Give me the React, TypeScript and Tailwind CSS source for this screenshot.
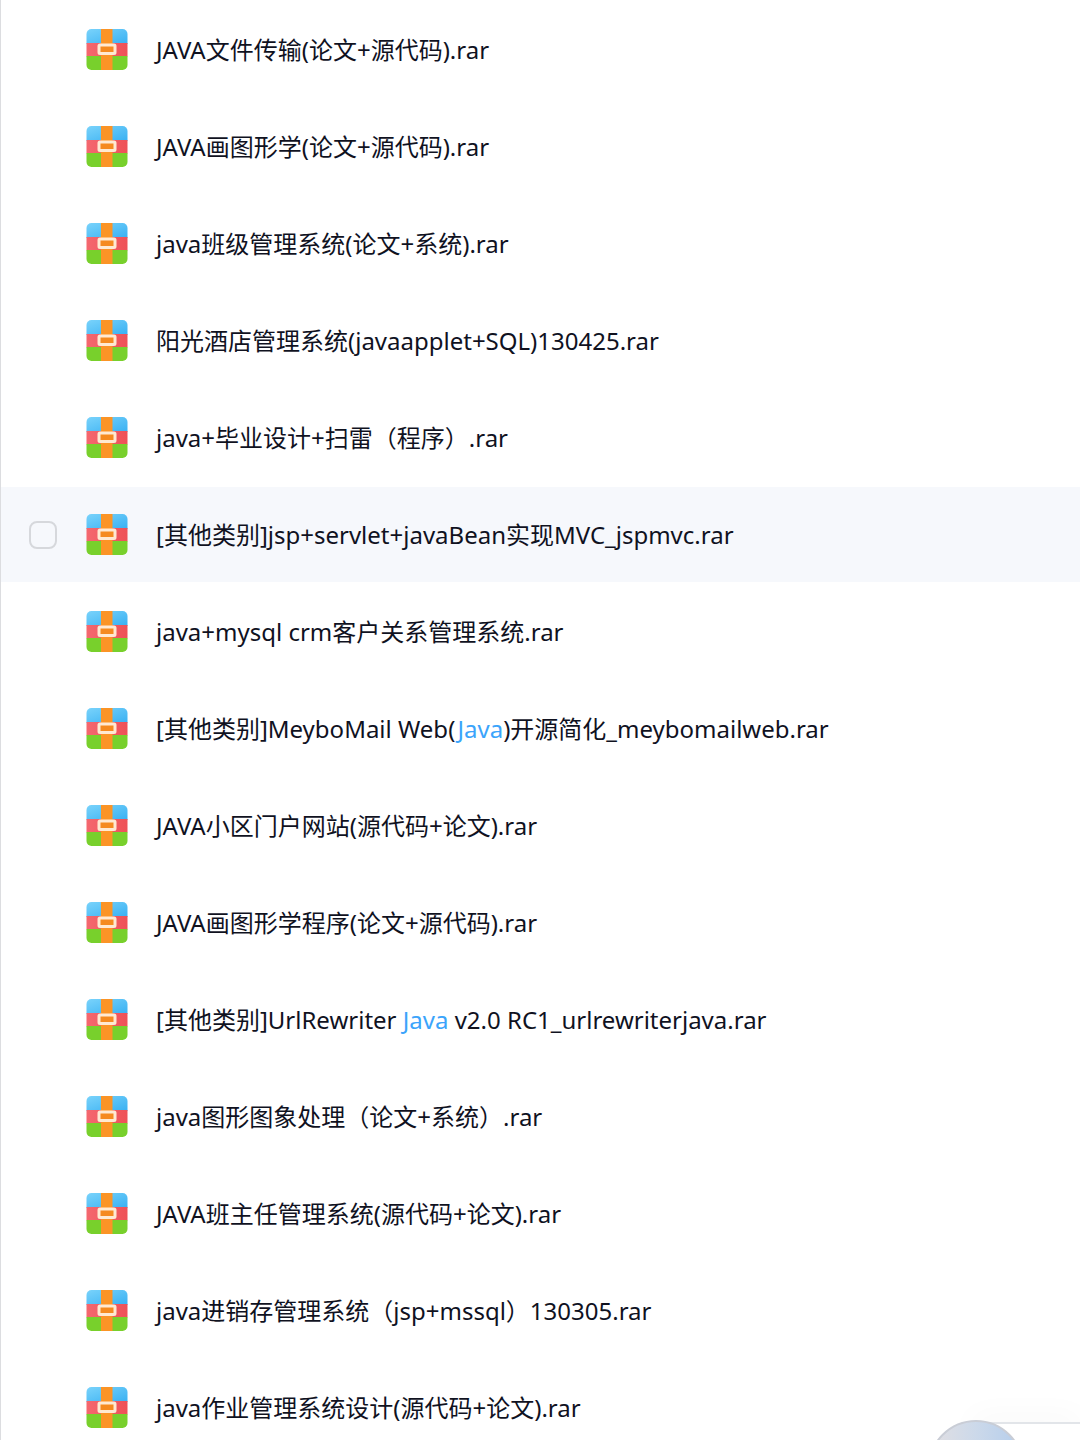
import React, { useState } from 'react';

const files = [
    { id: 1, name: 'JAVA文件传输(论文+源代码).rar' },
    { id: 2, name: 'JAVA画图形学(论文+源代码).rar' },
    { id: 3, name: 'java班级管理系统(论文+系统).rar' },
    { id: 4, name: '阳光酒店管理系统(javaapplet+SQL)130425.rar' },
    { id: 5, name: 'java+毕业设计+扫雷（程序）.rar' },
    { id: 6, name: '[其他类别]jsp+servlet+javaBean实现MVC_jspmvc.rar' },
    { id: 7, name: 'java+mysql crm客户关系管理系统.rar' },
    { id: 8, name: '[其他类别]MeyboMail Web(Java)开源简化_meybomailweb.rar' },
    { id: 9, name: 'JAVA小区门户网站(源代码+论文).rar' },
    { id: 10, name: 'JAVA画图形学程序(论文+源代码).rar' },
    { id: 11, name: '[其他类别]UrlRewriter Java v2.0 RC1_urlrewriterjava.rar' },
    { id: 12, name: 'java图形图象处理（论文+系统）.rar' },
    { id: 13, name: 'JAVA班主任管理系统(源代码+论文).rar' },
    { id: 14, name: 'java进销存管理系统（jsp+mssql）130305.rar' },
    { id: 15, name: 'java作业管理系统设计(源代码+论文).rar' },
];

const ArchiveIcon = () => (
    <svg viewBox="0 0 42 42" className="size-[42px] shrink-0" aria-hidden="true">
        <defs>
            <linearGradient id="sky" x1="0" y1="0" x2="1" y2="1">
                <stop offset="0" stopColor="#7ad3fb" />
                <stop offset="1" stopColor="#38b0f2" />
            </linearGradient>
            <linearGradient id="rose" x1="0" y1="0" x2="1" y2="0">
                <stop offset="0" stopColor="#f4686f" />
                <stop offset="1" stopColor="#ee5157" />
            </linearGradient>
            <clipPath id="box">
                <rect x="0.5" y="0" width="41" height="41" rx="5" />
            </clipPath>
        </defs>
        <g clipPath="url(#box)">
            <rect width="42" height="15" fill="url(#sky)" />
            <rect y="14" width="42" height="13.5" fill="url(#rose)" />
            <rect y="27" width="42" height="14.5" fill="#78d02c" />
            <rect x="15" width="11.5" height="42" fill="#fb9426" />
        </g>
        <rect x="13" y="16" width="16" height="8.5" rx="1" fill="#f58a20" stroke="#ffe9d2" strokeWidth="3" />
    </svg>
);

// Marks the keyword where it stands as a word of its own
const FileName = ({ name }: { name: string }) => (
    <>
        {name.split(/\b(Java)\b/).map((part, index) =>
            part === 'Java' ? <span key={index} className="text-[#3ba4fb]">{part}</span> : part
        )}
    </>
);

const App = () => {
    const [activeFile, setActiveFile] = useState(6);

    return (
        <main className="h-screen overflow-hidden border-l border-[#dcdde0] bg-white font-['Noto_Sans','Noto_Sans_CJK_SC',sans-serif] text-2xl text-[#10121f]">
            <ul>
                {files.map((file) => (
                    <li
                        key={file.id}
                        onMouseEnter={() => setActiveFile(file.id)}
                        className={`border-t-2 border-white ${activeFile === file.id ? 'bg-[#f6f8fc]' : 'bg-white'}`}
                    >
                        <label className="flex h-[95px] items-center pl-7">
                            <input
                                type="checkbox"
                                className={`mr-[29px] size-7 shrink-0 appearance-none rounded-lg border-2 border-[#d6d8dc] checked:bg-[#3ba4fb] ${activeFile === file.id ? 'opacity-100' : 'opacity-0'}`}
                            />
                            <ArchiveIcon />
                            <span className="ml-7 whitespace-nowrap">
                                <FileName name={file.name} />
                            </span>
                        </label>
                    </li>
                ))}
            </ul>

            <div className="fixed right-0 bottom-0 h-[18px] w-[108px] border-t-2 border-[#e2e5e9] bg-white shadow-[0_-4px_32px_rgba(0,0,0,0.04)]">
                <div className="absolute -top-1 -left-11 h-5 w-24 overflow-hidden">
                    <div className="size-24 rounded-full border-2 border-[#c9cdd6] bg-linear-to-r from-[#e2dfe2] via-[#ccd9ea] to-[#b4cdec]" />
                </div>
            </div>
        </main>
    );
};

export default App;
